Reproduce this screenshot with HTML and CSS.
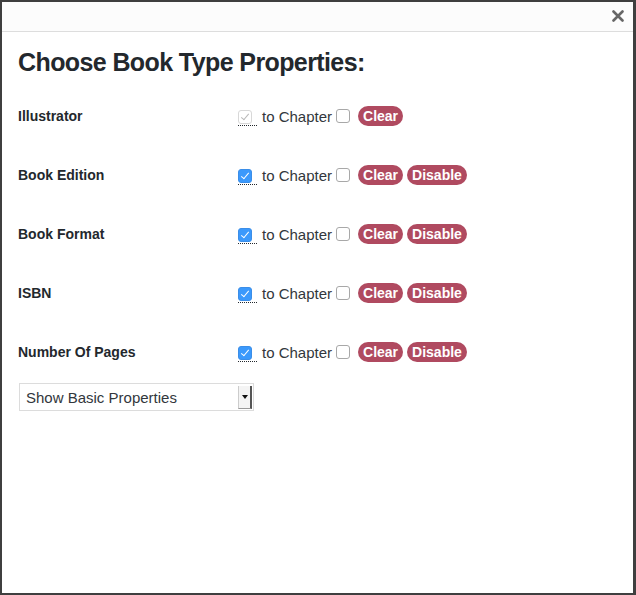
FILE: index.html
```html
<!DOCTYPE html>
<html>
<head>
<meta charset="utf-8">
<link rel="stylesheet" href="styles.css">
</head>
<body>
<div class="modal">
  <div class="modal-header">
    <svg class="close" width="12" height="12" viewBox="0 0 12 12"><path d="M1.5 1.5 L10.5 10.5 M10.5 1.5 L1.5 10.5" stroke="#666" stroke-width="2.6" stroke-linecap="round"/></svg>
  </div>
  <div class="modal-body">
    <h1 class="title">Choose Book Type Properties:</h1>
    <div class="rows">
      <div class="row">
        <div class="label">Illustrator</div>
        <div class="controls">
          <span class="tip"><span class="cb cb-disabled"></span></span>
          <span class="chap">to Chapter</span>
          <span class="cb"></span>
          <span class="badge badge-first">Clear</span>
        </div>
      </div>
      <div class="row">
        <div class="label">Book Edition</div>
        <div class="controls">
          <span class="tip"><span class="cb cb-checked"></span></span>
          <span class="chap">to Chapter</span>
          <span class="cb"></span>
          <span class="badge badge-first">Clear</span><span class="badge">Disable</span>
        </div>
      </div>
      <div class="row">
        <div class="label">Book Format</div>
        <div class="controls">
          <span class="tip"><span class="cb cb-checked"></span></span>
          <span class="chap">to Chapter</span>
          <span class="cb"></span>
          <span class="badge badge-first">Clear</span><span class="badge">Disable</span>
        </div>
      </div>
      <div class="row">
        <div class="label">ISBN</div>
        <div class="controls">
          <span class="tip"><span class="cb cb-checked"></span></span>
          <span class="chap">to Chapter</span>
          <span class="cb"></span>
          <span class="badge badge-first">Clear</span><span class="badge">Disable</span>
        </div>
      </div>
      <div class="row">
        <div class="label">Number Of Pages</div>
        <div class="controls">
          <span class="tip"><span class="cb cb-checked"></span></span>
          <span class="chap">to Chapter</span>
          <span class="cb"></span>
          <span class="badge badge-first">Clear</span><span class="badge">Disable</span>
        </div>
      </div>
    </div>
    <div class="select">
      <span class="select-text">Show Basic Properties</span>
      <span class="select-btn"><span class="arrow"></span></span>
    </div>
  </div>
</div>
</body>
</html>
```
FILE: styles.css
```css
html, body {
  margin: 0;
  padding: 0;
  width: 636px;
  height: 595px;
  background: #3f3f3f;
  overflow: hidden;
}
body {
  padding: 2px 3px 2px 2px;
  box-sizing: border-box;
  font-family: "Liberation Sans", Arial, sans-serif;
  color: #23282d;
}
.modal {
  background: #fff;
  height: 591px;
  width: 631px;
  display: flex;
  flex-direction: column;
}
.modal-header {
  height: 29px;
  background: #fcfcfc;
  border-bottom: 1px solid #dddddd;
  display: flex;
  justify-content: flex-end;
  align-items: center;
}
.close {
  margin-right: 9px;
  margin-top: -1px;
}
.modal-body {
  padding: 0 16px;
}
.title {
  font-size: 25px;
  letter-spacing: -0.6px;
  font-weight: bold;
  margin: 14px 0 0 0;
  line-height: 32px;
  color: #23282d;
}
.rows {
  display: flex;
  flex-direction: column;
  gap: 39px;
  margin-top: 28px;
}
.row {
  display: flex;
  align-items: center;
  height: 20px;
}
.label {
  width: 220px;
  font-size: 14px;
  font-weight: bold;
  color: #23282d;
}
.controls {
  display: flex;
  align-items: center;
}
.tip {
  display: inline-flex;
  border-bottom: 1px dotted #23282d;
  padding: 0 5px 1px 0;
  margin-top: 3px;
}
.cb {
  display: inline-block;
  box-sizing: border-box;
  width: 14px;
  height: 14px;
  border: 1px solid #a8a8a8;
  border-radius: 3px;
  background: #fff;
  position: relative;
}
.cb-checked {
  background: #3b99fc;
  border-color: #3b8ee8;
}
.cb-checked::after, .cb-disabled::after {
  content: "";
  position: absolute;
  left: 4px;
  top: 1px;
  width: 3px;
  height: 7px;
  border: solid #fff;
  border-width: 0 1.5px 1.5px 0;
  transform: rotate(40deg);
}
.cb-disabled {
  border-color: #d8d8d8;
}
.cb-disabled::after {
  border-color: #b8b8b8;
}
.chap {
  font-size: 15px;
  margin: 0 4px 0 5px;
  color: #32373c;
}
.badge {
  display: inline-block;
  background: #b04a60;
  color: #fff;
  font-weight: bold;
  font-size: 14px;
  line-height: 20px;
  padding: 0 5px;
  border-radius: 10px;
  margin-left: 4px;
}
.badge-first {
  margin-left: 8px;
}
.select {
  display: flex;
  width: 235px;
  height: 28px;
  box-sizing: border-box;
  border: 1px solid #dcdcdc;
  margin-left: 1px;
  margin-top: 21px;
  align-items: center;
}
.select-text {
  flex: 1;
  padding-left: 6px;
  font-size: 15px;
  color: #32373c;
}
.select-btn {
  width: 11px;
  height: 22px;
  margin-right: 1px;
  border-left: 1px solid #ccc;
  border-right: 2px solid #555;
  border-bottom: 1px solid #999;
  background: #f4f4f4;
  display: flex;
  align-items: center;
  justify-content: center;
}
.arrow {
  width: 0;
  height: 0;
  border-left: 3px solid transparent;
  border-right: 3px solid transparent;
  border-top: 4px solid #111;
}
```
